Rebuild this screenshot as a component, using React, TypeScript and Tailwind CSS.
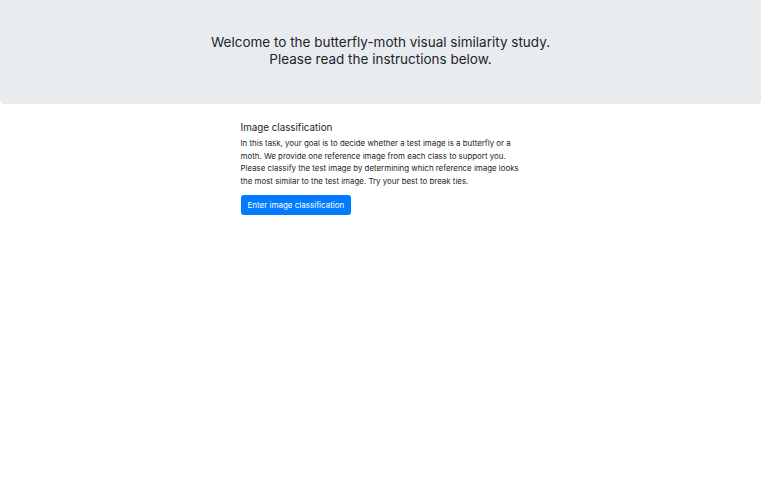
import React from 'react';

export default function App() {
  return (
    <div className="min-h-screen bg-white text-[#212529]" style={{ fontFamily: 'Inter, "Noto Sans", sans-serif' }}>
      {/* Header */}
      <header className="h-[104px] bg-[#e9ecef] rounded-b-[4px] flex flex-col items-center pt-[34px]">
        <h1 className="text-[13.5px] leading-[17px] text-center font-normal">
          Welcome to the butterfly-moth visual similarity study.
          <br />
          Please read the instructions below.
        </h1>
      </header>

      {/* Main content */}
      <main className="mx-auto w-[280px] pt-[17px]">
        <h2 className="text-[9.8px] leading-[13px] font-normal mb-[3px]">Image classification</h2>
        <p className="text-[7.9px] leading-[12.67px] mb-[7px]">
          In this task, your goal is to decide whether a test image is a butterfly or a moth. We provide one reference image from each class to support you. Please classify the test image by determining which reference image looks the most similar to the test image. Try your best to break ties.
        </p>
        <button className="block h-[20px] px-[7px] bg-[#007bff] text-white text-[8px] leading-[20px] rounded-[3px]">
          Enter image classification
        </button>
      </main>
    </div>
  );
}
